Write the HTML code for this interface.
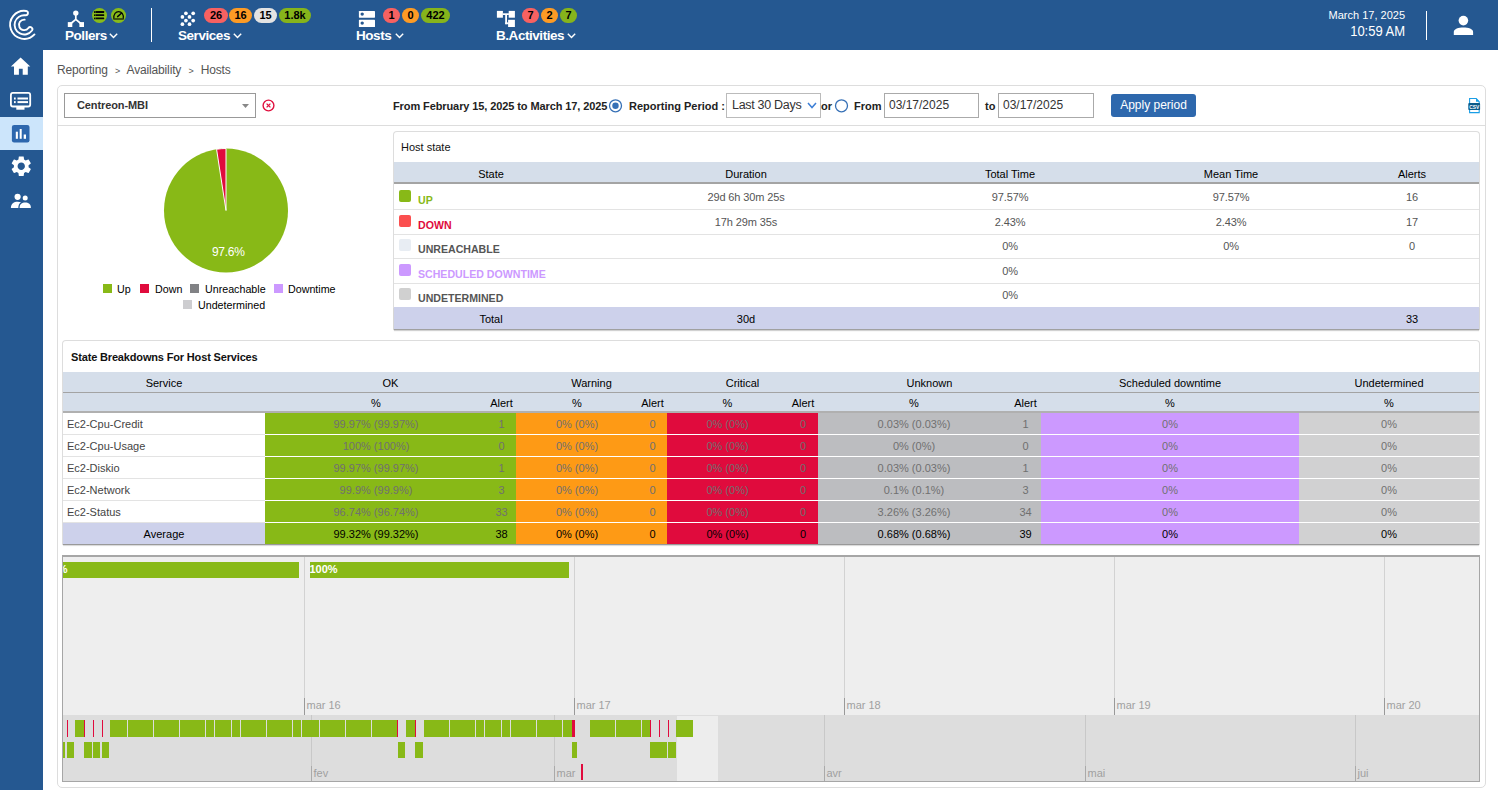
<!DOCTYPE html>
<html><head><meta charset="utf-8">
<style>
*{box-sizing:border-box;margin:0;padding:0}
html,body{width:1498px;height:790px;overflow:hidden;background:#fff;font-family:"Liberation Sans",sans-serif;color:#222;position:relative}
.a{position:absolute}
#hdr{left:0;top:0;width:1498px;height:50px;background:#255891}
#side{left:0;top:50px;width:43px;height:740px;background:#255891}
.nav{color:#fff;font-weight:bold;font-size:13.5px;letter-spacing:-0.45px;white-space:nowrap}
.bdg{height:15px;border-radius:8px;font-size:11px;font-weight:bold;color:#000;text-align:center;line-height:15px}
.red{background:#f76161}.org{background:#fd9b25}.gry{background:#e3e3e3}.grn{background:#86b41b}
.chev{width:9px;height:6px}
.lg{width:9px;height:9px}
.lgt{font-size:10.7px;color:#000;white-space:nowrap}
.th{font-size:11px;color:#000;text-align:center;white-space:nowrap}
.td{font-size:11px;letter-spacing:-0.12px;color:#555;text-align:center;white-space:nowrap}
.tt{font-size:11px;color:#000;text-align:center;white-space:nowrap}
.sq{width:12px;height:12px;border-radius:2px}
.stl{font-size:10.6px;font-weight:bold;white-space:nowrap}
.sv{font-size:11px;color:#444;white-space:nowrap}
.dd{font-size:11px;color:#707070;text-align:center;white-space:nowrap}
.tl{font-size:11px;color:#a0a0a0;white-space:nowrap}
.tb{font-size:11px;font-weight:bold;color:#fff;white-space:nowrap}
.fb{font-size:11px;font-weight:bold;color:#222;white-space:nowrap}
</style></head><body>
<div id="hdr" class="a">
  <!-- logo -->
  <svg class="a" style="left:0;top:0" width="50" height="50" viewBox="0 0 50 50">
    <path d="M34.48 34.43 A14.05 14.05 0 1 1 26.16 10.94 A2.2 2.2 0 0 1 25.54 15.29 A9.65 9.65 0 1 0 32.01 30.52 A2.2 2.2 0 0 0 28.45 27.94 A5.25 5.25 0 1 1 24.66 19.62" fill="none" stroke="#fff" stroke-width="1.9" stroke-linecap="round"/>
  </svg>
  <!-- pollers icon -->
  <svg class="a" style="left:62px;top:6px" width="28" height="24" viewBox="62 6 28 24" fill="#fff">
    <circle cx="75.8" cy="13.1" r="2.7"/>
    <path d="M75.8 14 V19.3 L70.3 24 M75.8 19.3 L81.3 24" stroke="#fff" stroke-width="1.7" fill="none"/>
    <rect x="67.8" y="22.1" width="4.5" height="4.9"/><rect x="79.4" y="22.1" width="4.6" height="4.9"/>
  </svg>
  <svg class="a" style="left:86px;top:4px" width="44" height="24" viewBox="86 4 44 24">
    <circle cx="99.5" cy="15.5" r="7.5" fill="#88bb1a"/><circle cx="118.5" cy="15.5" r="7.5" fill="#88bb1a"/>
    <rect x="94" y="11.1" width="10.2" height="1.8" rx="0.4" fill="#050505"/><rect x="94" y="14.3" width="10.2" height="1.8" rx="0.4" fill="#050505"/><rect x="94" y="17.5" width="10.2" height="1.8" rx="0.4" fill="#050505"/>
    <rect x="95.2" y="11.1" width="0.6" height="8.2" fill="#88bb1a" opacity="0.6"/>
    <path d="M113.9 19 C113.2 14 116 11.6 118.6 11.6 C121.5 11.6 124 14 123.2 19 Z" fill="none" stroke="#050505" stroke-width="1.2"/>
    <rect x="114" y="18.3" width="9.2" height="1.3" fill="#3a5010"/>
    <path d="M117.6 16.6 L121.4 13.3" stroke="#050505" stroke-width="1.5" stroke-linecap="round"/>
  </svg>
  <div class="a nav" style="left:65px;top:28px">Pollers</div>
  <svg class="a chev" style="left:109px;top:33px" viewBox="0 0 9 6"><path d="M0.8 0.8 L4.5 4.6 L8.2 0.8" stroke="#fff" stroke-width="1.4" fill="none"/></svg>
  <div class="a" style="left:151px;top:8px;width:1px;height:34px;background:#fff"></div>
  <!-- services -->
  <svg class="a" style="left:176px;top:6px" width="24" height="24" viewBox="176 6 24 24" fill="#fff">
    <circle cx="185.9" cy="13.3" r="1.85"/><circle cx="193.2" cy="13.3" r="1.85"/>
    <circle cx="182.4" cy="16.9" r="1.85"/><circle cx="189.5" cy="16.9" r="1.85"/>
    <circle cx="185.9" cy="20.6" r="1.85"/><circle cx="193.2" cy="20.6" r="1.85"/>
    <circle cx="182.4" cy="24.2" r="1.85"/><circle cx="189.5" cy="24.2" r="1.85"/>
  </svg>
  <div class="a bdg red" style="left:204px;top:8px;width:24px">26</div>
  <div class="a bdg org" style="left:229px;top:8px;width:23px">16</div>
  <div class="a bdg gry" style="left:254px;top:8px;width:23px">15</div>
  <div class="a bdg grn" style="left:279px;top:8px;width:32px">1.8k</div>
  <div class="a nav" style="left:178px;top:28px">Services</div>
  <svg class="a chev" style="left:233px;top:33px" viewBox="0 0 9 6"><path d="M0.8 0.8 L4.5 4.6 L8.2 0.8" stroke="#fff" stroke-width="1.4" fill="none"/></svg>
  <!-- hosts -->
  <svg class="a" style="left:354px;top:6px" width="28" height="24" viewBox="0 0 28 24">
    <rect x="4.9" y="4.9" width="16.1" height="6.8" rx="0.6" fill="#fff"/><rect x="4.9" y="13.8" width="16.1" height="7.2" rx="0.6" fill="#fff"/>
    <circle cx="8.2" cy="8.1" r="1.7" fill="#255891"/><circle cx="8.2" cy="17.1" r="1.7" fill="#255891"/>
  </svg>
  <div class="a bdg red" style="left:383px;top:8px;width:17px">1</div>
  <div class="a bdg org" style="left:402px;top:8px;width:17px">0</div>
  <div class="a bdg grn" style="left:421px;top:8px;width:29px">422</div>
  <div class="a nav" style="left:356px;top:28px">Hosts</div>
  <svg class="a chev" style="left:395px;top:33px" viewBox="0 0 9 6"><path d="M0.8 0.8 L4.5 4.6 L8.2 0.8" stroke="#fff" stroke-width="1.4" fill="none"/></svg>
  <!-- BA -->
  <svg class="a" style="left:492px;top:6px" width="28" height="24" viewBox="0 0 28 24" fill="#fff">
    <rect x="4.9" y="4.9" width="6" height="6.8"/><rect x="10.9" y="7.3" width="6" height="1.7"/>
    <rect x="16.7" y="4.9" width="6.2" height="6.8"/><rect x="13.2" y="9" width="1.8" height="9.2"/>
    <rect x="13.2" y="16.4" width="3.5" height="1.8"/><rect x="16.1" y="13.8" width="6.8" height="7.2"/>
  </svg>
  <div class="a bdg red" style="left:522px;top:8px;width:17px">7</div>
  <div class="a bdg org" style="left:541px;top:8px;width:17px">2</div>
  <div class="a bdg grn" style="left:560px;top:8px;width:17px">7</div>
  <div class="a nav" style="left:496px;top:28px">B.Activities</div>
  <svg class="a chev" style="left:567px;top:33px" viewBox="0 0 9 6"><path d="M0.8 0.8 L4.5 4.6 L8.2 0.8" stroke="#fff" stroke-width="1.4" fill="none"/></svg>
  <!-- right -->
  <div class="a" style="right:93px;top:9px;color:#fff;font-size:11px;text-align:right;white-space:nowrap">March 17, 2025</div>
  <div class="a" style="right:93px;top:23px;color:#fff;font-size:14px;transform:scaleX(0.93);transform-origin:right center;text-align:right;white-space:nowrap">10:59 AM</div>
  <div class="a" style="left:1426px;top:11px;width:1px;height:29px;background:#fff"></div>
  <svg class="a" style="left:1448px;top:10px" width="32" height="30" viewBox="1448 10 32 30" fill="#fff">
    <circle cx="1463.4" cy="20.6" r="4.8"/><path d="M1453.8 35 V32 C1453.8 29 1458.5 27.6 1463.4 27.6 C1468.3 27.6 1473.1 29 1473.1 32 V35 Z"/>
  </svg>
</div>
<div id="side" class="a">
  <svg class="a" style="left:0;top:0" width="43" height="30" viewBox="0 50 43 30" fill="#fff">
    <path d="M20.6 57.6 L30.3 66.6 H27.8 V74.8 H22.7 V68.7 H18.9 V74.8 H14 V66.6 H10.9 Z"/>
  </svg>
  <svg class="a" style="left:0;top:40px" width="43" height="22" viewBox="0 90 43 22">
    <rect x="10.9" y="92.9" width="19.3" height="13.6" rx="2" fill="none" stroke="#fff" stroke-width="1.8"/>
    <rect x="16.3" y="106.5" width="8.2" height="3.2" fill="#fff"/>
    <rect x="14" y="97.5" width="1.7" height="2" fill="#fff"/><rect x="17.5" y="97.5" width="10.5" height="2" fill="#fff"/>
    <rect x="14" y="101.1" width="1.7" height="2" fill="#fff"/><rect x="17.5" y="101.1" width="10.5" height="2" fill="#fff"/>
  </svg>
  <div class="a" style="left:0;top:67px;width:43px;height:33px;background:#cce5fb"></div>
  <svg class="a" style="left:0;top:70px" width="43" height="30" viewBox="0 120 43 30">
    <rect x="11.9" y="124.9" width="17.6" height="17.5" rx="2.2" fill="#2d67ae"/>
    <rect x="15.8" y="131.7" width="2.1" height="7.1" fill="#fff"/><rect x="19.7" y="129" width="2" height="9.8" fill="#fff"/><rect x="23.7" y="134.5" width="2.3" height="4.3" fill="#fff"/>
  </svg>
  <svg class="a" style="left:8.5px;top:104px" width="24.5" height="24.5" viewBox="0 0 24 24" fill="#fff">
    <path d="M19.14 12.94c.04-.3.06-.61.06-.94 0-.32-.02-.64-.07-.94l2.03-1.58c.18-.14.23-.41.12-.61l-1.92-3.32c-.12-.22-.37-.29-.59-.22l-2.39.96c-.5-.38-1.03-.7-1.62-.94l-.36-2.54c-.04-.24-.24-.41-.48-.41h-3.84c-.24 0-.43.17-.47.41l-.36 2.54c-.59.24-1.13.57-1.62.94l-2.39-.96c-.22-.08-.47 0-.59.22L2.74 8.87c-.12.21-.08.47.12.61l2.03 1.58c-.05.3-.09.63-.09.94s.02.64.07.94l-2.03 1.58c-.18.14-.23.41-.12.61l1.92 3.32c.12.22.37.29.59.22l2.39-.96c.5.38 1.03.7 1.62.94l.36 2.54c.05.24.24.41.48.41h3.84c.24 0 .44-.17.47-.41l.36-2.54c.59-.24 1.13-.56 1.62-.94l2.39.96c.22.08.47 0 .59-.22l1.92-3.32c.12-.22.07-.47-.12-.61l-2.01-1.58zM12 15.6c-1.98 0-3.6-1.62-3.6-3.6s1.62-3.6 3.6-3.6 3.6 1.62 3.6 3.6-1.62 3.6-3.6 3.6z"/>
  </svg>
  <svg class="a" style="left:0;top:90px" width="43" height="75" viewBox="0 140 43 75" fill="#fff">
    <circle cx="17.6" cy="196.8" r="3.1"/><circle cx="25.2" cy="198.1" r="2.5"/>
    <path d="M19.6 208 C19.6 204 22 202.6 25.2 202.6 C28.4 202.6 30.9 204 30.9 208 Z"/>
    <path d="M10.9 208 C10.9 203.5 14 201.7 17.6 201.7 C18.8 201.7 20 201.9 21 202.3 C19.2 203.4 18.3 205.5 18.3 208 Z"/>
  </svg>
</div>

<!-- breadcrumb -->
<div class="a" style="left:57px;top:63px;font-size:12px;letter-spacing:-0.15px;color:#555;white-space:nowrap">Reporting <span style="font-size:9px;margin:0 4px">&gt;</span> Availability <span style="font-size:9px;margin:0 4px">&gt;</span> Hosts</div>

<!-- outer panel -->
<div class="a" style="left:57px;top:85px;width:1429px;height:703px;border:1px solid #ddd;border-radius:5px"></div>
<div class="a" style="left:58px;top:125px;width:1427px;height:1px;background:#ddd"></div>

<!-- filter bar -->
<div class="a" style="left:64px;top:93px;width:192px;height:25px;border:1px solid #999"></div>
<div class="a" style="left:77px;top:99px;font-size:11px;letter-spacing:-0.1px;font-weight:bold;color:#333;white-space:nowrap">Centreon-MBI</div>
<svg class="a" style="left:242px;top:104px" width="7" height="4" viewBox="0 0 7 4"><path d="M0 0 H7 L3.5 4 Z" fill="#888"/></svg>
<svg class="a" style="left:262px;top:99px" width="13" height="13" viewBox="0 0 13 13"><circle cx="6.5" cy="6.5" r="5.4" fill="none" stroke="#e0113f" stroke-width="1.4"/><path d="M4.6 4.6 L8.4 8.4 M8.4 4.6 L4.6 8.4" stroke="#e0113f" stroke-width="1.3"/></svg>

<div class="a fb" style="left:393px;top:100px;letter-spacing:-0.1px">From February 15, 2025 to March 17, 2025</div>
<svg class="a" style="left:608px;top:98px" width="15" height="15" viewBox="0 0 15 15"><circle cx="7.5" cy="7.8" r="6" fill="none" stroke="#3670b6" stroke-width="1.3"/><circle cx="7.5" cy="7.8" r="3.2" fill="#3670b6"/></svg>
<div class="a fb" style="left:629px;top:100px">Reporting Period :</div>
<div class="a" style="left:726px;top:93px;width:95px;height:25px;border:1px solid #bbb"></div>
<div class="a" style="left:732px;top:98px;font-size:12.5px;letter-spacing:-0.3px;color:#333;white-space:nowrap">Last 30 Days</div>
<svg class="a" style="left:807px;top:102px" width="10" height="7" viewBox="0 0 10 7"><path d="M1 1 L5 5.5 L9 1" fill="none" stroke="#3d7fd6" stroke-width="1.5"/></svg>
<div class="a fb" style="left:821px;top:100px">or</div>
<svg class="a" style="left:834px;top:98px" width="15" height="15" viewBox="0 0 15 15"><circle cx="7.5" cy="7.8" r="6" fill="none" stroke="#3670b6" stroke-width="1.3"/></svg>
<div class="a fb" style="left:854px;top:100px">From</div>
<div class="a" style="left:884px;top:93px;width:95px;height:25px;border:1px solid #aaa"></div>
<div class="a" style="left:889px;top:98px;font-size:12px;color:#333;white-space:nowrap">03/17/2025</div>
<div class="a fb" style="left:985px;top:100px">to</div>
<div class="a" style="left:998px;top:93px;width:96px;height:25px;border:1px solid #aaa"></div>
<div class="a" style="left:1003px;top:98px;font-size:12px;color:#333;white-space:nowrap">03/17/2025</div>
<div class="a" style="left:1111px;top:94px;width:85px;height:23px;background:#2e68ad;border-radius:3px;color:#fff;font-size:12px;text-align:center;line-height:23px;white-space:nowrap">Apply period</div>
<svg class="a" style="left:1466px;top:96px" width="16" height="19" viewBox="1466 96 16 19">
  <path d="M1469.6 98.5 H1476.2 L1479.2 101.6 V112.6 H1469.6 Z" fill="#fff" stroke="#1a9ee6" stroke-width="1.1"/>
  <path d="M1476 98.3 L1479.4 101.8 H1476 Z" fill="#1a9ee6"/>
  <rect x="1468.3" y="103.1" width="11.8" height="7" rx="0.8" fill="#0b5a8a"/>
  <text x="1474.2" y="109" font-family="Liberation Sans" font-size="5.4" font-weight="bold" fill="#fff" text-anchor="middle" textLength="10" lengthAdjust="spacingAndGlyphs">CSV</text>
</svg>

<!-- pie -->
<svg class="a" style="left:160px;top:144px" width="132" height="134" viewBox="160 144 132 134">
  <circle cx="226" cy="210.5" r="62" fill="#88b917"/>
  <path d="M226 210.5 L216.57 149.22 A62 62 0 0 1 226 148.5 Z" fill="#e00b3d" stroke="#fff" stroke-width="1" stroke-linejoin="round"/>
</svg>
<div class="a" style="left:212px;top:245px;font-size:12px;letter-spacing:-0.3px;color:#fff;white-space:nowrap">97.6%</div>
<div class="a lg" style="left:103px;top:284px;background:#88b917"></div><div class="a lgt" style="left:117px;top:283px">Up</div>
<div class="a lg" style="left:140px;top:284px;background:#e00b3d"></div><div class="a lgt" style="left:155px;top:283px">Down</div>
<div class="a lg" style="left:190px;top:284px;background:#818285"></div><div class="a lgt" style="left:205px;top:283px">Unreachable</div>
<div class="a lg" style="left:274px;top:284px;background:#cc99ff"></div><div class="a lgt" style="left:288px;top:283px">Downtime</div>
<div class="a lg" style="left:183px;top:300px;background:#cdcdd0"></div><div class="a lgt" style="left:198px;top:299px">Undetermined</div>

<!-- host state -->
<div class="a" style="left:393px;top:131px;width:1087px;height:199px;border:1px solid #ddd;border-bottom:none;border-radius:4px 4px 0 0"></div>
<div class="a" style="left:401px;top:141px;font-size:11px;color:#111;white-space:nowrap">Host state</div>
<div class="a" style="left:394px;top:162px;width:1085px;height:22px;background:#d5deea;border-bottom:2px solid #a4a4a4"></div>

<div class="a th" style="left:393px;top:168px;width:196px">State</div>
<div class="a th" style="left:589px;top:168px;width:314px">Duration</div>
<div class="a th" style="left:903px;top:168px;width:214px">Total Time</div>
<div class="a th" style="left:1117px;top:168px;width:228px">Mean Time</div>
<div class="a th" style="left:1345px;top:168px;width:134px">Alerts</div>
<div class="a" style="left:394px;top:209px;width:1085px;height:1px;background:#e3e3e3"></div>
<div class="a sq" style="left:399px;top:190px;background:#88b917"></div>
<div class="a stl" style="left:418px;top:194px;color:#88b917">UP</div>
<div class="a td" style="left:589px;top:191px;width:314px">29d 6h 30m 25s</div>
<div class="a td" style="left:903px;top:191px;width:214px">97.57%</div>
<div class="a td" style="left:1117px;top:191px;width:228px">97.57%</div>
<div class="a td" style="left:1345px;top:191px;width:134px">16</div>
<div class="a" style="left:394px;top:234px;width:1085px;height:1px;background:#e3e3e3"></div>
<div class="a sq" style="left:399px;top:215px;background:#fb4f4f"></div>
<div class="a stl" style="left:418px;top:219px;color:#e00b3d">DOWN</div>
<div class="a td" style="left:589px;top:216px;width:314px">17h 29m 35s</div>
<div class="a td" style="left:903px;top:216px;width:214px">2.43%</div>
<div class="a td" style="left:1117px;top:216px;width:228px">2.43%</div>
<div class="a td" style="left:1345px;top:216px;width:134px">17</div>
<div class="a" style="left:394px;top:258px;width:1085px;height:1px;background:#e3e3e3"></div>
<div class="a sq" style="left:399px;top:239px;background:#e8edf3"></div>
<div class="a stl" style="left:418px;top:243px;color:#555">UNREACHABLE</div>
<div class="a td" style="left:903px;top:240px;width:214px">0%</div>
<div class="a td" style="left:1117px;top:240px;width:228px">0%</div>
<div class="a td" style="left:1345px;top:240px;width:134px">0</div>
<div class="a" style="left:394px;top:283px;width:1085px;height:1px;background:#e3e3e3"></div>
<div class="a sq" style="left:399px;top:264px;background:#cc99ff"></div>
<div class="a stl" style="left:418px;top:268px;color:#cc99ff">SCHEDULED DOWNTIME</div>
<div class="a td" style="left:903px;top:265px;width:214px">0%</div>
<div class="a" style="left:394px;top:307px;width:1085px;height:1px;background:#e3e3e3"></div>
<div class="a sq" style="left:399px;top:288px;background:#d0d0d0"></div>
<div class="a stl" style="left:418px;top:292px;color:#555">UNDETERMINED</div>
<div class="a td" style="left:903px;top:289px;width:214px">0%</div>
<div class="a" style="left:394px;top:307px;width:1085px;height:23px;background:#cdd1eb;border-bottom:1.5px solid #a0a0a0;box-shadow:0 1px 1px rgba(0,0,0,0.18)"></div>
<div class="a tt" style="left:393px;top:313px;width:196px">Total</div>
<div class="a tt" style="left:589px;top:313px;width:314px">30d</div>
<div class="a tt" style="left:1345px;top:313px;width:134px">33</div>

<!-- state breakdowns -->
<div class="a" style="left:62px;top:340px;width:1418px;height:205px;border:1px solid #ddd;border-bottom:none;border-radius:4px 4px 0 0"></div>
<div class="a" style="left:71px;top:351px;font-size:11px;letter-spacing:-0.16px;font-weight:bold;color:#111;white-space:nowrap">State Breakdowns For Host Services</div>
<div class="a" style="left:63px;top:372px;width:1416px;height:41px;background:#d5deea"></div>
<div class="a" style="left:63px;top:392px;width:1416px;height:1px;background:#a3a3a3"></div>
<div class="a" style="left:63px;top:411px;width:1416px;height:2px;background:#b0b0b0"></div>

<div class="a th" style="left:63px;top:377px;width:202px">Service</div>
<div class="a th" style="left:265px;top:377px;width:251px">OK</div>
<div class="a th" style="left:516px;top:377px;width:151px">Warning</div>
<div class="a th" style="left:667px;top:377px;width:151px">Critical</div>
<div class="a th" style="left:818px;top:377px;width:223px">Unknown</div>
<div class="a th" style="left:1041px;top:377px;width:258px">Scheduled downtime</div>
<div class="a th" style="left:1299px;top:377px;width:180px">Undetermined</div>
<div class="a th" style="left:265px;top:397px;width:222px">%</div>
<div class="a th" style="left:487px;top:397px;width:29px">Alert</div>
<div class="a th" style="left:516px;top:397px;width:122px">%</div>
<div class="a th" style="left:638px;top:397px;width:29px">Alert</div>
<div class="a th" style="left:667px;top:397px;width:121px">%</div>
<div class="a th" style="left:788px;top:397px;width:30px">Alert</div>
<div class="a th" style="left:818px;top:397px;width:192px">%</div>
<div class="a th" style="left:1010px;top:397px;width:31px">Alert</div>
<div class="a th" style="left:1041px;top:397px;width:258px">%</div>
<div class="a th" style="left:1299px;top:397px;width:180px">%</div>
<div class="a" style="left:265px;top:413px;width:251px;height:131px;background:#88b917"></div>
<div class="a" style="left:516px;top:413px;width:151px;height:131px;background:#fe9a15"></div>
<div class="a" style="left:667px;top:413px;width:151px;height:131px;background:#e00b3d"></div>
<div class="a" style="left:818px;top:413px;width:223px;height:131px;background:#bcbdc0"></div>
<div class="a" style="left:1041px;top:413px;width:258px;height:131px;background:#cc99ff"></div>
<div class="a" style="left:1299px;top:413px;width:180px;height:131px;background:#d1d1d2"></div>
<div class="a" style="left:63px;top:523px;width:202px;height:21px;background:#cdd1eb"></div>
<div class="a" style="left:63px;top:434px;width:202px;height:1px;background:#e3e3e3"></div>
<div class="a" style="left:265px;top:434px;width:1214px;height:1px;background:#fff"></div>
<div class="a" style="left:63px;top:456px;width:202px;height:1px;background:#e3e3e3"></div>
<div class="a" style="left:265px;top:456px;width:1214px;height:1px;background:#fff"></div>
<div class="a" style="left:63px;top:478px;width:202px;height:1px;background:#e3e3e3"></div>
<div class="a" style="left:265px;top:478px;width:1214px;height:1px;background:#fff"></div>
<div class="a" style="left:63px;top:500px;width:202px;height:1px;background:#e3e3e3"></div>
<div class="a" style="left:265px;top:500px;width:1214px;height:1px;background:#fff"></div>
<div class="a" style="left:63px;top:522px;width:202px;height:1px;background:#e3e3e3"></div>
<div class="a" style="left:265px;top:522px;width:1214px;height:1px;background:#fff"></div>
<div class="a" style="left:63px;top:544px;width:1416px;height:1px;background:#999;box-shadow:0 1px 1px rgba(0,0,0,0.18)"></div>
<div class="a sv" style="left:67px;top:418px">Ec2-Cpu-Credit</div>
<div class="a dd" style="left:265px;top:418px;width:222px">99.97% (99.97%)</div>
<div class="a dd" style="left:487px;top:418px;width:29px">1</div>
<div class="a dd" style="left:516px;top:418px;width:122px">0% (0%)</div>
<div class="a dd" style="left:638px;top:418px;width:29px">0</div>
<div class="a dd" style="left:667px;top:418px;width:121px">0% (0%)</div>
<div class="a dd" style="left:788px;top:418px;width:30px">0</div>
<div class="a dd" style="left:818px;top:418px;width:192px">0.03% (0.03%)</div>
<div class="a dd" style="left:1010px;top:418px;width:31px">1</div>
<div class="a dd" style="left:1041px;top:418px;width:258px">0%</div>
<div class="a dd" style="left:1299px;top:418px;width:180px">0%</div>
<div class="a sv" style="left:67px;top:440px">Ec2-Cpu-Usage</div>
<div class="a dd" style="left:265px;top:440px;width:222px">100% (100%)</div>
<div class="a dd" style="left:487px;top:440px;width:29px">0</div>
<div class="a dd" style="left:516px;top:440px;width:122px">0% (0%)</div>
<div class="a dd" style="left:638px;top:440px;width:29px">0</div>
<div class="a dd" style="left:667px;top:440px;width:121px">0% (0%)</div>
<div class="a dd" style="left:788px;top:440px;width:30px">0</div>
<div class="a dd" style="left:818px;top:440px;width:192px">0% (0%)</div>
<div class="a dd" style="left:1010px;top:440px;width:31px">0</div>
<div class="a dd" style="left:1041px;top:440px;width:258px">0%</div>
<div class="a dd" style="left:1299px;top:440px;width:180px">0%</div>
<div class="a sv" style="left:67px;top:462px">Ec2-Diskio</div>
<div class="a dd" style="left:265px;top:462px;width:222px">99.97% (99.97%)</div>
<div class="a dd" style="left:487px;top:462px;width:29px">1</div>
<div class="a dd" style="left:516px;top:462px;width:122px">0% (0%)</div>
<div class="a dd" style="left:638px;top:462px;width:29px">0</div>
<div class="a dd" style="left:667px;top:462px;width:121px">0% (0%)</div>
<div class="a dd" style="left:788px;top:462px;width:30px">0</div>
<div class="a dd" style="left:818px;top:462px;width:192px">0.03% (0.03%)</div>
<div class="a dd" style="left:1010px;top:462px;width:31px">1</div>
<div class="a dd" style="left:1041px;top:462px;width:258px">0%</div>
<div class="a dd" style="left:1299px;top:462px;width:180px">0%</div>
<div class="a sv" style="left:67px;top:484px">Ec2-Network</div>
<div class="a dd" style="left:265px;top:484px;width:222px">99.9% (99.9%)</div>
<div class="a dd" style="left:487px;top:484px;width:29px">3</div>
<div class="a dd" style="left:516px;top:484px;width:122px">0% (0%)</div>
<div class="a dd" style="left:638px;top:484px;width:29px">0</div>
<div class="a dd" style="left:667px;top:484px;width:121px">0% (0%)</div>
<div class="a dd" style="left:788px;top:484px;width:30px">0</div>
<div class="a dd" style="left:818px;top:484px;width:192px">0.1% (0.1%)</div>
<div class="a dd" style="left:1010px;top:484px;width:31px">3</div>
<div class="a dd" style="left:1041px;top:484px;width:258px">0%</div>
<div class="a dd" style="left:1299px;top:484px;width:180px">0%</div>
<div class="a sv" style="left:67px;top:506px">Ec2-Status</div>
<div class="a dd" style="left:265px;top:506px;width:222px">96.74% (96.74%)</div>
<div class="a dd" style="left:487px;top:506px;width:29px">33</div>
<div class="a dd" style="left:516px;top:506px;width:122px">0% (0%)</div>
<div class="a dd" style="left:638px;top:506px;width:29px">0</div>
<div class="a dd" style="left:667px;top:506px;width:121px">0% (0%)</div>
<div class="a dd" style="left:788px;top:506px;width:30px">0</div>
<div class="a dd" style="left:818px;top:506px;width:192px">3.26% (3.26%)</div>
<div class="a dd" style="left:1010px;top:506px;width:31px">34</div>
<div class="a dd" style="left:1041px;top:506px;width:258px">0%</div>
<div class="a dd" style="left:1299px;top:506px;width:180px">0%</div>
<div class="a tt" style="left:63px;top:528px;width:202px;color:#000;font-weight:normal">Average</div>
<div class="a tt" style="left:265px;top:528px;width:222px;color:#000;font-weight:normal">99.32% (99.32%)</div>
<div class="a tt" style="left:487px;top:528px;width:29px;color:#000;font-weight:normal">38</div>
<div class="a tt" style="left:516px;top:528px;width:122px;color:#000;font-weight:normal">0% (0%)</div>
<div class="a tt" style="left:638px;top:528px;width:29px;color:#000;font-weight:normal">0</div>
<div class="a tt" style="left:667px;top:528px;width:121px;color:#000;font-weight:normal">0% (0%)</div>
<div class="a tt" style="left:788px;top:528px;width:30px;color:#000;font-weight:normal">0</div>
<div class="a tt" style="left:818px;top:528px;width:192px;color:#000;font-weight:normal">0.68% (0.68%)</div>
<div class="a tt" style="left:1010px;top:528px;width:31px;color:#000;font-weight:normal">39</div>
<div class="a tt" style="left:1041px;top:528px;width:258px;color:#000;font-weight:normal">0%</div>
<div class="a tt" style="left:1299px;top:528px;width:180px;color:#000;font-weight:normal">0%</div>

<!-- timeline -->
<div class="a" style="left:62px;top:555px;width:1418px;height:227px;border:1.5px solid #a6a6a6;border-top-width:2px;overflow:hidden;background:#eee">
<div style="position:relative;left:-63.5px;top:-557px;width:1498px;height:790px">
<div class="a" style="left:0;top:715px;width:1498px;height:75px;background:#ddd"></div>

<div class="a" style="left:304px;top:557px;width:1px;height:158px;background:#d2d2d2"></div>
<div class="a" style="left:304px;top:698px;width:1px;height:17px;background:#999"></div>
<div class="a" style="left:574px;top:557px;width:1px;height:158px;background:#d2d2d2"></div>
<div class="a" style="left:574px;top:698px;width:1px;height:17px;background:#999"></div>
<div class="a" style="left:844px;top:557px;width:1px;height:158px;background:#d2d2d2"></div>
<div class="a" style="left:844px;top:698px;width:1px;height:17px;background:#999"></div>
<div class="a" style="left:1114px;top:557px;width:1px;height:158px;background:#d2d2d2"></div>
<div class="a" style="left:1114px;top:698px;width:1px;height:17px;background:#999"></div>
<div class="a" style="left:1384px;top:557px;width:1px;height:158px;background:#d2d2d2"></div>
<div class="a" style="left:1384px;top:698px;width:1px;height:17px;background:#999"></div>
<div class="a tl" style="left:307px;top:699px">mar 16</div>
<div class="a tl" style="left:577px;top:699px">mar 17</div>
<div class="a tl" style="left:847px;top:699px">mar 18</div>
<div class="a tl" style="left:1117px;top:699px">mar 19</div>
<div class="a tl" style="left:1387px;top:699px">mar 20</div>
<div class="a" style="left:62px;top:562px;width:237px;height:16px;background:#88b917"></div>
<div class="a" style="left:310px;top:562px;width:259px;height:16px;background:#88b917"></div>
<div class="a tb" style="left:40px;top:563px">100%</div>
<div class="a tb" style="left:310px;top:563px">100%</div>
<div class="a" style="left:311px;top:715px;width:1px;height:66px;background:#c8c8c8"></div>
<div class="a" style="left:311px;top:766px;width:1px;height:15px;background:#aaa"></div>
<div class="a tl" style="left:314px;top:767px">fev</div>
<div class="a" style="left:554px;top:715px;width:1px;height:66px;background:#c8c8c8"></div>
<div class="a" style="left:554px;top:766px;width:1px;height:15px;background:#aaa"></div>
<div class="a tl" style="left:557px;top:767px">mar</div>
<div class="a" style="left:824px;top:715px;width:1px;height:66px;background:#c8c8c8"></div>
<div class="a" style="left:824px;top:766px;width:1px;height:15px;background:#aaa"></div>
<div class="a tl" style="left:827px;top:767px">avr</div>
<div class="a" style="left:1085px;top:715px;width:1px;height:66px;background:#c8c8c8"></div>
<div class="a" style="left:1085px;top:766px;width:1px;height:15px;background:#aaa"></div>
<div class="a tl" style="left:1088px;top:767px">mai</div>
<div class="a" style="left:1355px;top:715px;width:1px;height:66px;background:#c8c8c8"></div>
<div class="a" style="left:1355px;top:766px;width:1px;height:15px;background:#aaa"></div>
<div class="a tl" style="left:1358px;top:767px">jui</div>
<div class="a" style="left:677px;top:716px;width:41px;height:66px;background:#ededed"></div>
<div class="a" style="left:75px;top:720px;width:10px;height:17px;background:#88b917"></div>
<div class="a" style="left:110px;top:720px;width:17px;height:17px;background:#88b917"></div>
<div class="a" style="left:128px;top:720px;width:25px;height:17px;background:#88b917"></div>
<div class="a" style="left:154px;top:720px;width:25px;height:17px;background:#88b917"></div>
<div class="a" style="left:180px;top:720px;width:25px;height:17px;background:#88b917"></div>
<div class="a" style="left:206px;top:720px;width:8px;height:17px;background:#88b917"></div>
<div class="a" style="left:215px;top:720px;width:16px;height:17px;background:#88b917"></div>
<div class="a" style="left:232px;top:720px;width:8px;height:17px;background:#88b917"></div>
<div class="a" style="left:241px;top:720px;width:25px;height:17px;background:#88b917"></div>
<div class="a" style="left:267px;top:720px;width:25px;height:17px;background:#88b917"></div>
<div class="a" style="left:293px;top:720px;width:8px;height:17px;background:#88b917"></div>
<div class="a" style="left:302px;top:720px;width:17px;height:17px;background:#88b917"></div>
<div class="a" style="left:320px;top:720px;width:25px;height:17px;background:#88b917"></div>
<div class="a" style="left:346px;top:720px;width:25px;height:17px;background:#88b917"></div>
<div class="a" style="left:372px;top:720px;width:26px;height:17px;background:#88b917"></div>
<div class="a" style="left:406px;top:720px;width:10px;height:17px;background:#88b917"></div>
<div class="a" style="left:424px;top:720px;width:25px;height:17px;background:#88b917"></div>
<div class="a" style="left:450px;top:720px;width:25px;height:17px;background:#88b917"></div>
<div class="a" style="left:476px;top:720px;width:8px;height:17px;background:#88b917"></div>
<div class="a" style="left:485px;top:720px;width:16px;height:17px;background:#88b917"></div>
<div class="a" style="left:502px;top:720px;width:8px;height:17px;background:#88b917"></div>
<div class="a" style="left:511px;top:720px;width:25px;height:17px;background:#88b917"></div>
<div class="a" style="left:537px;top:720px;width:25px;height:17px;background:#88b917"></div>
<div class="a" style="left:563px;top:720px;width:9px;height:17px;background:#88b917"></div>
<div class="a" style="left:590px;top:720px;width:25px;height:17px;background:#88b917"></div>
<div class="a" style="left:616px;top:720px;width:25px;height:17px;background:#88b917"></div>
<div class="a" style="left:642px;top:720px;width:9px;height:17px;background:#88b917"></div>
<div class="a" style="left:676px;top:720px;width:17px;height:17px;background:#88b917"></div>
<div class="a" style="left:67px;top:720px;width:1px;height:17px;background:#e00b3d"></div>
<div class="a" style="left:84px;top:720px;width:1.5px;height:17px;background:#e00b3d"></div>
<div class="a" style="left:93px;top:720px;width:1.2px;height:17px;background:#e00b3d"></div>
<div class="a" style="left:102px;top:720px;width:1.2px;height:17px;background:#e00b3d"></div>
<div class="a" style="left:397px;top:720px;width:1.5px;height:17px;background:#e00b3d"></div>
<div class="a" style="left:415px;top:720px;width:1.5px;height:17px;background:#e00b3d"></div>
<div class="a" style="left:572px;top:720px;width:3px;height:17px;background:#e00b3d"></div>
<div class="a" style="left:650px;top:720px;width:1.5px;height:17px;background:#e00b3d"></div>
<div class="a" style="left:659px;top:720px;width:1.3px;height:17px;background:#e00b3d"></div>
<div class="a" style="left:668px;top:720px;width:1.3px;height:17px;background:#e00b3d"></div>
<div class="a" style="left:62px;top:742px;width:3px;height:16px;background:#88b917"></div>
<div class="a" style="left:67px;top:742px;width:7px;height:16px;background:#88b917"></div>
<div class="a" style="left:84px;top:742px;width:8px;height:16px;background:#88b917"></div>
<div class="a" style="left:93px;top:742px;width:7px;height:16px;background:#88b917"></div>
<div class="a" style="left:102px;top:742px;width:7px;height:16px;background:#88b917"></div>
<div class="a" style="left:398px;top:742px;width:7px;height:16px;background:#88b917"></div>
<div class="a" style="left:415px;top:742px;width:8px;height:16px;background:#88b917"></div>
<div class="a" style="left:572px;top:742px;width:5px;height:16px;background:#88b917"></div>
<div class="a" style="left:650px;top:742px;width:17px;height:16px;background:#88b917"></div>
<div class="a" style="left:668px;top:742px;width:8px;height:16px;background:#88b917"></div>
<div class="a" style="left:581px;top:764px;width:2px;height:16px;background:#e00b3d"></div>
</div></div>
</body></html>
